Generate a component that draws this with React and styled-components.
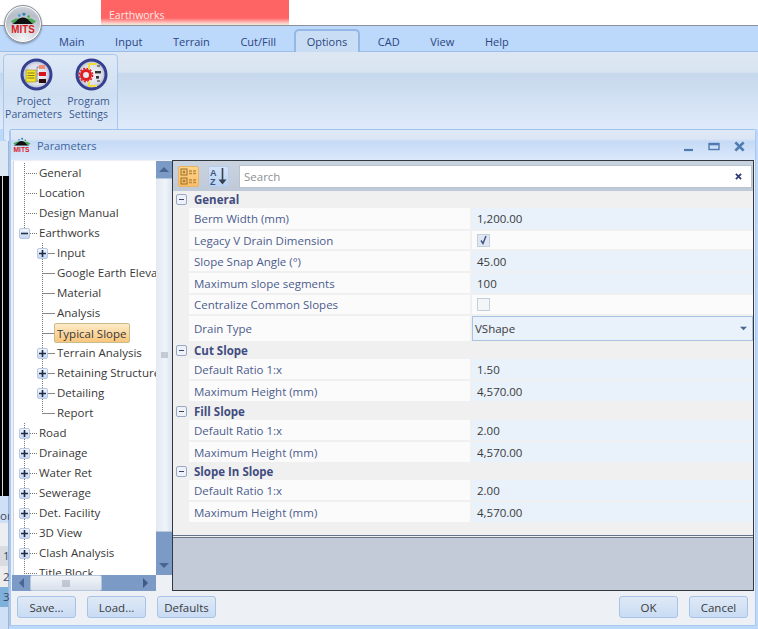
import React from "react";
import styled, { createGlobalStyle } from "styled-components";

const Global = createGlobalStyle`
  html, body { margin: 0; padding: 0; background: #fff; }
  body { font-family: "Open Sans", "Liberation Sans", sans-serif; font-size: 12px; }
  * { box-sizing: border-box; }
`;

const Page = styled.div`
  position: relative; width: 758px; height: 629px; overflow: hidden;
  display: flex; flex-direction: column; background: #bcd8fb;
`;
const TitleBar = styled.div`
  height: 26px; flex: none; background: #fff; padding-left: 101px;
  border-bottom: 1px solid #8e9298;
`;
const ContextTab = styled.div`
  width: 188px; height: 25px; padding: 8px 0 0 8px; font-size: 10.5px; line-height: 15px; color: #ffe9e6;
  background: linear-gradient(#ff6464 0, #ff6464 72%, #ffc9c4 92%, #e8ecd8 100%);
`;
const TabBar = styled.div`
  height: 26px; flex: none; display: flex; align-items: flex-end; padding-left: 43.7px;
  background: #bcd8fb; border-bottom: 1px solid #9dbde8;
`;
const Tab = styled.div`
  height: ${p => (p.$active ? "23px" : "25px")}; padding: 0 ${p => (p.$active ? "10.5px" : "15.3px")};
  margin: 0 ${p => (p.$active ? "2.8px" : "0")}; margin-bottom: -1px;
  display: flex; align-items: center; font-size: 11px; color: #2b4780; padding-top: ${p => (p.$active ? "0" : "3px")};
  ${p => p.$active && `
    background: #c9def5; border: 2px solid #93b7e6; border-bottom: 0; border-radius: 5px 5px 0 0;
  `}
`;
const RibbonBody = styled.div`
  height: 77px; flex: none; padding: 2px 0 0 3px;
  background: linear-gradient(#dde7f3 0, #d9e4f1 26%, #c6d8ec 28%, #dfebfb 100%);
`;
const RibbonGroup = styled.div`
  position: relative; z-index: 1; width: 115px; height: 88px; padding: 3px 0 0 2px;
  display: flex; border: 1px solid #a8c7ee; border-radius: 4px;
  background: linear-gradient(#dfe9f6 0, #cfdff2 45%, #dfeafa 100%);
`;
const RibbonButton = styled.div`
  width: 55px; display: flex; flex-direction: column; align-items: center;
  font-size: 10.5px; line-height: 12.5px; color: #3b5a8e; text-align: center;
  svg { margin: 0 0 4px 5px; }
`;
const Lower = styled.div`
  flex: 1; display: flex; min-height: 0;
`;
const Dock = styled.div`
  width: 9px; flex: none; display: flex; flex-direction: column; font-size: 11.5px;
  color: #3c4a64; overflow: hidden; margin-top: 12px; position: relative; z-index: 2;
`;
const DockPart = styled.div`
  height: ${p => p.$h}px; flex: none; background: ${p => p.$bg}; padding-left: ${p => p.$indent ?? 3}px;
  line-height: ${p => p.$h}px; white-space: nowrap;
  border-right: 1px solid #9fb7d6;
`;
const DockBlack = styled.div`
  height: 320px; flex: none; background: linear-gradient(90deg, #000 0 2px, #ddd 2px 3px, #000 3px);
`;
const LogoBadge = styled.div`
  position: absolute; left: 4px; top: 5px; width: 38px; height: 38px; z-index: 5;
  border-radius: 50%; border: 1px solid #8a9099;
  background: radial-gradient(circle at 50% 92%, #f2f4f7 0, #b7bec8 68%, #dfe3e9 100%);
  box-shadow: 0 1px 2px rgba(60,70,90,.55), inset 0 0 0 1px #fff;
  display: flex; align-items: center; justify-content: center;
`;
const Dialog = styled.div`
  position: absolute; left: 9px; top: 129px; width: 747px; height: 497px; z-index: 3;
  display: flex; flex-direction: column; background: #edf0f5;
  border: 1px solid #a9c8f0; border-top: 1px solid #9dc0ec; border-left-width: 2px;
  border-radius: 3px 3px 0 0;
`;
const DialogTitle = styled.div`
  height: 30px; flex: none; display: flex; align-items: center; padding: 1px 10px 0 1px; gap: 6px;
  background: linear-gradient(#e0e9f6 0, #dbe5f4 30%, #c5daf6 38%, #dbe8fb 100%);
  font-size: 11px; color: #3f669e;
`;
const TitleText = styled.span`
  flex: 1; line-height: 16px;
`;
const WindowButtons = styled.div`
  display: flex; align-items: center; gap: 14px; margin-top: 2px;
`;
const DialogBody = styled.div`
  flex: 1; min-height: 0; display: flex; padding: 0 2px 0 1px;
`;
const TreeColumn = styled.div`
  width: 160px; flex: none; margin-top: 1px; display: grid;
  grid-template-columns: 144px 16px; grid-template-rows: 414px 16px;
`;
const Tree = styled.div`
  grid-column: 1; grid-row: 1; margin-left: 1px; background: #fff; border-left: 1px solid #c9d6e8; padding-top: 2px; overflow: hidden;
`;
const TreeRow = styled.div`
  height: 20px; display: flex; align-items: stretch; white-space: nowrap; color: #383838; font-size: 11.5px;
`;
const dots = (c) => `repeating-linear-gradient(to bottom, ${c} 0 1px, transparent 1px 2px)`;
const dash = (c) => `repeating-linear-gradient(to right, ${c} 0 1px, transparent 1px 2px)`;
const Indent = styled.div`
  width: 18px; flex: none;
`;
const Elbow = styled.div`
  width: 25px; flex: none; display: flex; align-items: center;
  background-image: ${() => dots("#777")}, ${p => (p.$solid ? "linear-gradient(#888,#888)" : dash("#777"))};
  background-repeat: no-repeat;
  background-size: 1px ${p => (p.$line === "end" ? "50%" : "100%")}, 13px 1px;
  background-position: 10px 0, 10px 50%;
`;
const Expander = styled.div`
  width: 11px; height: 11px; margin-left: 5px; border: 1px solid #b6c8e6; border-radius: 2px;
  background: linear-gradient(#f2f6fc, #c6d8f2);
  display: flex; align-items: center; justify-content: center;
  font-size: 0; position: relative;
  svg { display: block; }
`;
const TreeLabel = styled.div`
  line-height: 20px; height: 20px;
  ${p => p.$selected && `
    margin-left: -3px; padding: 0 3px; line-height: 19px; border: 1px solid #c8bb8e; border-radius: 2px; padding-left: 2px;
    background: linear-gradient(#fdeac7, #f9c67c);
  `}
`;
const VScroll = styled.div`
  grid-column: 2; grid-row: 1; display: flex; flex-direction: column; background: #7b9ac6;
`;
const ScrollEnd = styled.div`
  flex: none; height: ${p => p.$h}px; display: flex; align-items: ${p => p.$align || "center"}; justify-content: center; padding-bottom: ${p => p.$pb || 0}px;
`;
const VThumb = styled.div`
  height: 354px; flex: none; background: linear-gradient(90deg, #e2e9f3, #f0f4f9 60%, #d9e2ee);
  border-top: 1px solid #b8c6da; border-bottom: 1px solid #b8c6da;
  display: flex; align-items: center; justify-content: center;
`;
const HScroll = styled.div`
  grid-column: 1; grid-row: 2; display: flex; align-items: stretch; background: #7b9ac6; padding-left: 0;
`;
const HThumb = styled.div`
  width: 72px; flex: none; background: linear-gradient(#f1f4f9, #d9e1ec);
  border: 1px solid #b8c6da; border-radius: 2px;
  display: flex; align-items: center; justify-content: center;
`;
const ArrowBox = styled.div`
  display: flex; align-items: center; justify-content: ${p => (p.$grow ? "flex-end" : "center")};
  padding-right: ${p => (p.$grow ? "7px" : "0")};
  width: ${p => p.$w}px; flex: ${p => (p.$grow ? 1 : "none")};
`;
const Grid = styled.div`
  width: 582px; flex: none; display: flex; flex-direction: column; border: 1px solid #33383f; background: #c3cbd9;
`;
const GridToolbar = styled.div`
  height: 30px; flex: none; display: flex; align-items: center; padding: 0 1px 0 5px;
  background: linear-gradient(#c9d3e0, #bfc9d8);
`;
const ToolButton = styled.div`
  width: 21px; height: 21px; flex: none; margin-right: ${p => p.$mr}px; border-radius: 2px; display: flex; align-items: center; justify-content: center;
  border: 1px solid ${p => (p.$on ? "#e9b45f" : "#b5cde9")};
  background: ${p => (p.$on ? "linear-gradient(#fdd48c,#fbbf6b)" : "linear-gradient(#d4e4f8,#b9d2f2)")};
`;
const Search = styled.div`
  width: 513px; height: 23px; flex: none; background: #fff; border: 1px solid #b9c2cf; display: flex; align-items: center; justify-content: space-between;
  padding: 0 9px 0 4px; color: #8c8f94; font-size: 11.5px;
`;
const GridList = styled.div`
  height: 347px; flex: none; background: #f0f0f0; border-bottom: 3px double #66738a;
`;
const Group = styled.div`
  display: flex; flex-direction: column; gap: 2px; margin-top: ${p => p.$top}px;
`;
const GroupHeader = styled.div`
  height: 17px; margin-bottom: -2px; display: flex; align-items: center; gap: 7px; padding-left: 3px;
  font-weight: 700; font-size: 11.5px; color: #414c80;
`;
const GroupToggle = styled.div`
  width: 11px; height: 11px; flex: none; border: 1px solid #98a8c4; border-radius: 2px; background: #eef2f8; display: flex; align-items: center; justify-content: center;
  &::before { content: ""; width: 5px; height: 1.5px; background: #3d4660; }
`;
const PropRow = styled.div`
  height: ${p => p.$h}px; display: grid; grid-template-columns: 281px 281px; column-gap: 2px; margin-left: 16px;
`;
const PropLabel = styled.div`
  background: #fbfbfb; display: flex; align-items: center; padding-left: 5px; font-size: 11.5px; color: #4c5c8e; white-space: nowrap;
`;
const PropValue = styled.div`
  display: flex; align-items: center; padding-left: 5px; font-size: 11.5px; color: #3a3a3a;
  background: ${p => (p.$plain ? "#fbfbfb" : "#e9f1fb")};
  ${p => p.$select && `border: 1px solid #aac4e4; justify-content: space-between; padding: 0 5px 0 2px;`}
`;
const Check = styled.div`
  width: 13px; height: 13px; border: 1px solid #c4cfdd; background: ${p => (p.$on ? "#dfe7f2" : "#f4f5f7")}; display: flex; align-items: center; justify-content: center;
`;
const Footer = styled.div`
  flex: none; height: 34px; display: flex; align-items: flex-start; padding: 5px 7px 0 6px; gap: 11px; position: relative;
`;
const Spacer = styled.div`
  flex: 1;
`;
const FootButton = styled.div`
  width: 59px; height: 22px; display: flex; align-items: center; justify-content: center; font-size: 11.5px; color: #3a3a3a;
  border: 1px solid #a7c3e6; border-radius: 3px; background: linear-gradient(#dfe9f6, #c9dcf4);
`;

function MitsLogo({ size = 30 }) {
  return (
    <svg width={size} height={size} viewBox="0 0 30 30">
      <circle cx="11" cy="6" r="1.4" fill="#3f9bd6" />
      <circle cx="16" cy="4.5" r="1.6" fill="#2f7fc0" />
      <circle cx="21" cy="7" r="1.3" fill="#48a34c" />
      <path d="M2 12 L7 9 L24 9 L29 12 L27 14 L4 14Z" fill="#4aa85a" />
      <path d="M3 15 C8 14 9 8 15 8 C21 8 22 14 27 15Z" fill="#111" />
      <text x="15" y="25" textAnchor="middle" fontFamily="Liberation Sans" fontWeight="700" fontSize="11.5" fill="#d91c24" textLength="25" lengthAdjust="spacingAndGlyphs">MITS</text>
    </svg>
  );
}
function RoundIcon({ children }) {
  return (
    <svg width="33" height="33" viewBox="0 0 33 33">
      <defs>
        <radialGradient id="rb" cx="50%" cy="50%" r="50%">
          <stop offset="0%" stopColor="#f4f5fa" />
          <stop offset="70%" stopColor="#dcdfea" />
          <stop offset="100%" stopColor="#a9afd0" />
        </radialGradient>
      </defs>
      <circle cx="16.5" cy="16.5" r="14.5" fill="url(#rb)" stroke="#35418f" strokeWidth="3" />
      {children}
    </svg>
  );
}
const ProjectIcon = () => (
  <RoundIcon>
    <rect x="6" y="12" width="10" height="12" fill="#f2e32a" stroke="#8f8a20" strokeWidth=".6" />
    <path d="M7.5 15h7M7.5 17.5h7M7.5 20h7" stroke="#6b6620" strokeWidth=".8" />
    <path d="M17 9v15M17 9h2M17 16h2M17 23h2" stroke="#777" strokeWidth=".8" fill="none" />
    <rect x="19" y="7" width="6" height="4" fill="#f28a7a" />
    <rect x="19" y="14" width="7" height="4" fill="#d8141c" />
    <rect x="19" y="21" width="7" height="4" fill="#2a0c0c" />
  </RoundIcon>
);
const SettingsIcon = () => (
  <RoundIcon>
    <circle cx="11" cy="17" r="4.5" fill="none" stroke="#e02020" strokeWidth="3" />
    <circle cx="11" cy="17" r="6.6" fill="none" stroke="#e02020" strokeWidth="1.6" strokeDasharray="2 1.5" />
    <path d="M22 6h-8v5M14 23v5h8" stroke="#f0dd3a" strokeWidth="2" fill="none" />
    <path d="M22 8h3M22 23h3" stroke="#666" strokeWidth="1.4" />
    <rect x="20" y="13" width="6" height="2.4" fill="#333" />
    <rect x="21" y="18" width="3" height="2.6" fill="#333" />
  </RoundIcon>
);
const Plus = () => (
  <svg width="7" height="7" viewBox="0 0 7 7"><path d="M3.5 0v7M0 3.5h7" stroke="#1f2a44" strokeWidth="1.6" /></svg>
);
const Minus = () => (
  <svg width="7" height="7" viewBox="0 0 7 7"><path d="M0 3.5h7" stroke="#26344f" strokeWidth="1.6" /></svg>
);
const Tri = ({ dir, color = "#4a6590", scale = 1 }) => {
  const pts = { up: "0,6 5,1 10,6", down: "0,1 5,6 10,1", left: "6,0 1,5 6,10", right: "1,0 6,5 1,10" }[dir];
  const vert = dir === "up" || dir === "down";
  return (
    <svg width={(vert ? 10 : 7) * scale} height={(vert ? 7 : 10) * scale} viewBox={vert ? "0 0 10 7" : "0 0 7 10"}>
      <polygon points={pts} fill={color} />
    </svg>
  );
};
const GripV = () => (
  <svg width="7" height="7" viewBox="0 0 7 7"><path d="M0 1h7M0 3h7M0 5h7" stroke="#9aa4b3" strokeWidth="1" /></svg>
);
const GripH = () => (
  <svg width="8" height="7" viewBox="0 0 8 7"><path d="M1 0v7M3 0v7M5 0v7M7 0v7" stroke="#9aa4b3" strokeWidth="1" /></svg>
);
const CategorizedIcon = () => (
  <svg width="17" height="17" viewBox="0 0 17 17" fill="none">
    <rect x="1" y="1" width="6" height="6" stroke="#9a6a1e" />
    <path d="M2.5 4h3M4 2.5v3" stroke="#9a6a1e" />
    <rect x="1" y="10" width="6" height="6" stroke="#9a6a1e" />
    <path d="M2.5 13h3M4 11.5v3" stroke="#9a6a1e" />
    <path d="M9 3h3M13 3h3M9 5.5h3M13 5.5h3M9 12h3M13 12h3M9 14.5h3M13 14.5h3" stroke="#b98a3e" strokeWidth="1.4" />
  </svg>
);
const AlphaIcon = () => (
  <svg width="19" height="19" viewBox="0 0 19 19">
    <text x="1" y="8.5" fontFamily="Liberation Sans" fontWeight="700" fontSize="9" fill="#3f5378">A</text>
    <text x="1" y="18" fontFamily="Liberation Sans" fontWeight="700" fontSize="9" fill="#3f5378">Z</text>
    <path d="M13.5 1v14" stroke="#38404e" strokeWidth="1.6" />
    <path d="M9.5 12.5h8l-4 5z" fill="#38404e" />
  </svg>
);
const Cross = ({ size = 8, color = "#2e3a78", w = 2 }) => (
  <svg width={size} height={size} viewBox="0 0 8 8"><path d="M1 1l6 6M7 1l-6 6" stroke={color} strokeWidth={w} /></svg>
);
const Tick = () => (
  <svg width="9" height="10" viewBox="0 0 9 10" fill="none"><path d="M2 5.5L4 8.5 7 1" stroke="#3a4f80" strokeWidth="1.4" /></svg>
);

const tree = [
  { t: "General", l: 1, line: "full" }, { t: "Location", l: 1, line: "full" }, { t: "Design Manual", l: 1, line: "full" },
  { t: "Earthworks", l: 1, e: "-", line: "end" },
  { t: "Input", l: 2, e: "+", line: "full" }, { t: "Google Earth Elevation", l: 2, line: "full" }, { t: "Material", l: 2, line: "full" },
  { t: "Analysis", l: 2, line: "full" }, { t: "Typical Slope", l: 2, line: "full", sel: true }, { t: "Terrain Analysis", l: 2, e: "+", line: "full" },
  { t: "Retaining Structures", l: 2, e: "+", line: "full" }, { t: "Detailing", l: 2, e: "+", line: "full" }, { t: "Report", l: 2, line: "end" },
  { t: "Road", l: 1, e: "+", line: "full" }, { t: "Drainage", l: 1, e: "+", line: "full" }, { t: "Water Ret", l: 1, e: "+", line: "full" },
  { t: "Sewerage", l: 1, e: "+", line: "full" }, { t: "Det. Facility", l: 1, e: "+", line: "full" }, { t: "3D View", l: 1, e: "+", line: "full" },
  { t: "Clash Analysis", l: 1, e: "+", line: "full" }, { t: "Title Block", l: 1, line: "full" },
];

const groups = [
  { name: "General", top: 0, rows: [
    { k: "Berm Width (mm)", v: "1,200.00", h: 21 },
    { k: "Legacy V Drain Dimension", check: true, h: 18 },
    { k: "Slope Snap Angle (°)", v: "45.00", h: 20 },
    { k: "Maximum slope segments", v: "100", h: 20 },
    { k: "Centralize Common Slopes", check: false, h: 19 },
    { k: "Drain Type", v: "VShape", select: true, h: 25 },
  ]},
  { name: "Cut Slope", top: 1, rows: [
    { k: "Default Ratio 1:x", v: "1.50", h: 20 }, { k: "Maximum Height (mm)", v: "4,570.00", h: 20 },
  ]},
  { name: "Fill Slope", top: 2, rows: [
    { k: "Default Ratio 1:x", v: "2.00", h: 20 }, { k: "Maximum Height (mm)", v: "4,570.00", h: 20 },
  ]},
  { name: "Slope In Slope", top: 1, rows: [
    { k: "Default Ratio 1:x", v: "2.00", h: 20 }, { k: "Maximum Height (mm)", v: "4,570.00", h: 20 },
  ]},
];

const tabs = ["Main", "Input", "Terrain", "Cut/Fill", "Options", "CAD", "View", "Help"];

export default function App() {
  return (
    <Page>
      <Global />
      <LogoBadge><MitsLogo size={28} /></LogoBadge>
      <TitleBar><ContextTab>Earthworks</ContextTab></TitleBar>
      <TabBar>
        {tabs.map(t => <Tab key={t} $active={t === "Options"}>{t}</Tab>)}
      </TabBar>
      <RibbonBody>
        <RibbonGroup>
          <RibbonButton><ProjectIcon />Project<br />Parameters</RibbonButton>
          <RibbonButton><SettingsIcon />Program<br />Settings</RibbonButton>
        </RibbonGroup>
      </RibbonBody>
      <Lower>
        <Dock>
          <DockPart $h={35} $bg="#dbe7f5" />
          <DockBlack />
          <DockPart $h={13} $bg="#cfe0f6" />
          <DockPart $h={14} $bg="#cfe0f6" $indent={0}>or</DockPart>
          <DockPart $h={23} $bg="#eceef1" />
          <DockPart $h={20} $bg="#d8dce1">1</DockPart>
          <DockPart $h={21} $bg="#ececec">2</DockPart>
          <DockPart $h={20} $bg="#7eb0dc">3</DockPart>
          <DockPart $h={22} $bg="#cfe0f6" />
        </Dock>
      </Lower>
      <Dialog>
        <DialogTitle>
          <MitsLogo size={19} />
          <TitleText>Parameters</TitleText>
          <WindowButtons>
            <svg width="11" height="11" viewBox="0 0 11 11"><path d="M1 9h9" stroke="#4f7bb0" strokeWidth="2.2" /></svg>
            <svg width="12" height="9" viewBox="0 0 12 9" fill="none"><rect x="1" y="1.5" width="10" height="6" stroke="#4f7bb0" strokeWidth="1.4" /><path d="M1 2.5h10" stroke="#4f7bb0" strokeWidth="1.6" /></svg>
            <Cross size={11} color="#4f7bb0" w={2} />
          </WindowButtons>
        </DialogTitle>
        <DialogBody>
          <TreeColumn>
            <Tree>
              {tree.map(n => (
                <TreeRow key={n.t}>
                  {n.l === 2 && <Indent />}
                  <Elbow $line={n.line} $solid={n.l === 2}>
                    {n.e && <Expander>{n.e === "+" ? <Plus /> : <Minus />}</Expander>}
                  </Elbow>
                  <TreeLabel $selected={n.sel}>{n.t}</TreeLabel>
                </TreeRow>
              ))}
            </Tree>
            <VScroll>
              <ScrollEnd $h={17}><Tri dir="up" /></ScrollEnd>
              <VThumb><GripV /></VThumb>
              <ScrollEnd $h={43} $align="flex-end" $pb={6}><Tri dir="down" /></ScrollEnd>
            </VScroll>
            <HScroll>
              <ArrowBox $w={18}><Tri dir="left" /></ArrowBox>
              <HThumb><GripH /></HThumb>
              <ArrowBox $grow><Tri dir="right" color="#3f5a88" /></ArrowBox>
            </HScroll>
          </TreeColumn>
          <Grid>
            <GridToolbar>
              <ToolButton $on $mr={9}><CategorizedIcon /></ToolButton>
              <ToolButton $mr={10}><AlphaIcon /></ToolButton>
              <Search>Search<Cross size={7} /></Search>
            </GridToolbar>
            <GridList>
              {groups.map(g => (
                <Group key={g.name} $top={g.top}>
                  <GroupHeader><GroupToggle />{g.name}</GroupHeader>
                  {g.rows.map(r => (
                    <PropRow key={g.name + r.k} $h={r.h}>
                      <PropLabel>{r.k}</PropLabel>
                      {"check" in r ? (
                        <PropValue $plain><Check $on={r.check}>{r.check && <Tick />}</Check></PropValue>
                      ) : (
                        <PropValue $select={r.select}>{r.v}{r.select && <Tri dir="down" scale={0.7} />}</PropValue>
                      )}
                    </PropRow>
                  ))}
                </Group>
              ))}
            </GridList>
          </Grid>
        </DialogBody>
        <Footer>
          <FootButton>Save...</FootButton>
          <FootButton>Load...</FootButton>
          <FootButton>Defaults</FootButton>
          <Spacer />
          <FootButton>OK</FootButton>
          <FootButton>Cancel</FootButton>
        </Footer>
      </Dialog>
    </Page>
  );
}
